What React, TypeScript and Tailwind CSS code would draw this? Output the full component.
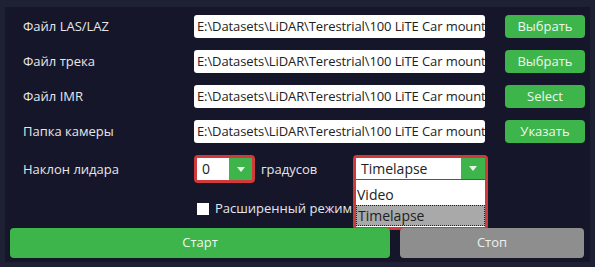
import React from "react";

const PATH = "E:\\Datasets\\LiDAR\\Terestrial\\100 LiTE Car mount";

function Arrow() {
  return (
    <svg width="8" height="5" viewBox="0 0 8 5">
      <path d="M0 0 L8 0 L4 5 Z" fill="#e8f5e9" />
    </svg>
  );
}

function Row({ label, btn }: { label: string; btn: string }) {
  return (
    <div className="flex items-center h-[23px]">
      <div className="w-[171px] text-[13px] text-[#e6e6ea]">{label}</div>
      <div className="w-[291px] h-[23px] bg-white rounded-[3px] overflow-hidden whitespace-nowrap text-[13px] leading-[23px] text-[#222] pl-[3px] tracking-[-0.1px]">
        {PATH}
      </div>
      <div className="ml-[20px] w-[80px] h-[23px] bg-[#3db54a] rounded-[4px] flex items-center justify-center text-[13px] text-[#eef8ee]">
        {btn}
      </div>
    </div>
  );
}

export default function App() {
  return (
    <div
      className="w-[595px] h-[267px] bg-[#1e2034] pt-[7px] pl-[5px] pr-[5px] pb-[5px]"
      style={{ fontFamily: '"Open Sans", "Noto Sans", sans-serif' }}
    >
      <div className="w-full h-full bg-[#15162a] pl-[18px] pt-[8px] relative">
        <div className="flex flex-col gap-[12px]">
          <Row label="Файл LAS/LAZ" btn="Выбрать" />
          <Row label="Файл трека" btn="Выбрать" />
          <Row label="Файл IMR" btn="Select" />
          <Row label="Папка камеры" btn="Указать" />
        </div>
        <div className="flex items-start mt-[12px] h-[28px]">
          <div className="w-[171px] text-[13px] text-[#e6e6ea] leading-[28px]">Наклон лидара</div>
          <div className="border-[3px] border-[#d03a3a] rounded-[4px] w-[61px] h-[28px] flex">
            <div className="flex-1 bg-white text-[14px] leading-[22px] pl-[5px] text-[#222]">0</div>
            <div className="w-[23px] bg-[#3db54a] flex items-center justify-center">
              <Arrow />
            </div>
          </div>
          <div className="ml-[6px] text-[13px] text-[#e6e6ea] leading-[28px]">градусов</div>
        </div>
        <div className="flex items-center mt-[16px] ml-[174px]">
          <div className="w-[12px] h-[12px] bg-white" />
          <div className="ml-[6px] text-[13px] text-[#e6e6ea]">Расширенный режим</div>
        </div>
        <div className="absolute left-[348px] top-[148px] w-[135px] h-[75px] border-[3px] border-[#d03a3a] rounded-[4px] bg-white flex flex-col">
          <div className="flex h-[22px] border-b border-[#555]">
            <div className="flex-1 bg-white text-[14px] leading-[22px] pl-[5px] text-[#222]">Timelapse</div>
            <div className="w-[24px] bg-[#3db54a] flex items-center justify-center">
              <Arrow />
            </div>
          </div>
          <div className="text-[14px] leading-[20px] text-[#222] pl-[1px] mt-[5px]">Video</div>
          <div className="text-[14px] leading-[19px] text-[#222] pl-[1px] bg-[#a9a9a9] border border-dotted border-[#222]">Timelapse</div>
        </div>
        <div className="absolute left-[5px] top-[221px] flex gap-[10px]">
          <div className="w-[380px] h-[30px] bg-[#3db54a] rounded-[4px] flex items-center justify-center text-[13px] text-[#eef8ee]">Старт</div>
          <div className="w-[184px] h-[30px] bg-[#8e8e8e] rounded-[4px] flex items-center justify-center text-[13px] text-[#eeeeee]">Стоп</div>
        </div>
      </div>
    </div>
  );
}
